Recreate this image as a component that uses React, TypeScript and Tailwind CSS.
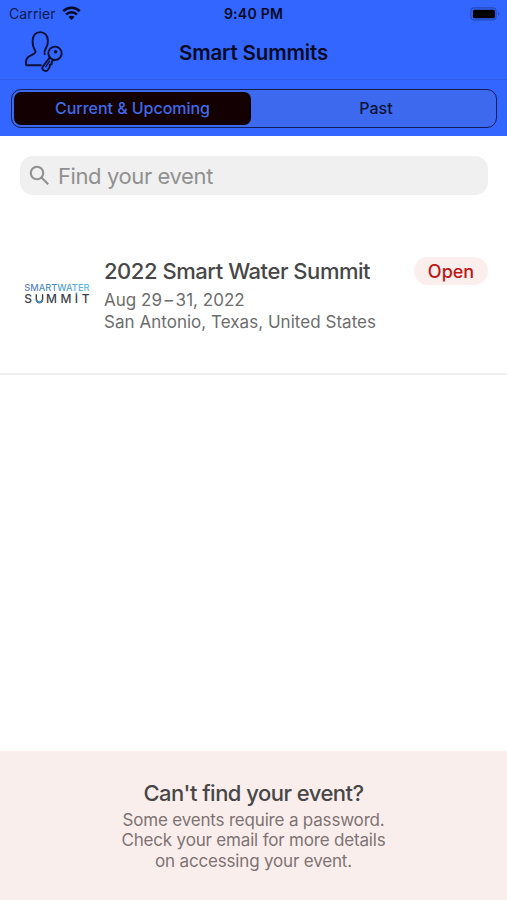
import React from "react";

function WifiIcon() {
  return (
    <svg width="19" height="15" viewBox="0 0 19 15" fill="none">
      <path d="M1.2 5.2 A11.8 11.8 0 0 1 17.8 5.2" stroke="#030922" strokeWidth="2.6" />
      <path d="M4.1 8.5 A7.4 7.4 0 0 1 14.9 8.5" stroke="#030922" strokeWidth="2.5" />
      <path d="M9.5 14 L6.5 11 A4.1 4.1 0 0 1 12.5 11 Z" fill="#030922" />
    </svg>
  );
}

function UserKeyIcon() {
  return (
    <svg width="40" height="42" viewBox="0 0 40 42" fill="none" stroke="#0a1033" strokeWidth="1.9" strokeLinecap="round" strokeLinejoin="round">
      <path d="M17.8 35.2 H3.2 C2.2 30.5 3.5 27.5 7 25.8 L10.4 24.1 C12.6 23 13 21.6 11.8 19.9 C10 17.3 9.6 14.6 9.6 10.8 C9.6 5.5 12.8 2.1 17.2 2.1 C21.6 2.1 24.9 5.5 24.9 10.8 C24.9 14 24.3 16.2 22.8 18.4 C21.5 20.4 21 22.2 21.7 24.2" />
      <circle cx="32" cy="23.3" r="6.7" />
      <path d="M26.6 27.6 L19.8 36.6 C18 39.9 22.8 42.6 25 39.7 L26.8 36.8 L26.8 34.8 L28.7 34 L28.8 31.8 L30.3 29.9" />
      <path d="M26.6 31.1 L22.8 36.8" strokeWidth="1.2" />
      <circle cx="32.6" cy="21.8" r="1.8" fill="#0a1033" stroke="none" />
    </svg>
  );
}

function BatteryIcon() {
  return (
    <svg width="31" height="14" viewBox="0 0 31 14" fill="none">
      <rect x="0.9" y="0.9" width="25.2" height="12" rx="3.4" stroke="#2449b8" strokeWidth="1.1" />
      <rect x="2.9" y="2.7" width="22" height="8.6" rx="1.5" fill="#000" />
      <path d="M28 5 C29.8 5.7 29.8 8.1 28 8.8 Z" fill="#2449b8" />
    </svg>
  );
}

function SummitLogo() {
  return (
    <svg width="68" height="28" viewBox="-1 -2 68 28" fontFamily="Inter, sans-serif">
      <defs>
        <linearGradient id="water" gradientUnits="userSpaceOnUse" x1="0" x2="65" y1="0" y2="0">
          <stop offset="0" stopColor="#6480b8" />
          <stop offset="0.5" stopColor="#4f95c8" />
          <stop offset="1" stopColor="#5fc0e0" />
        </linearGradient>
      </defs>
      <text x="0.3" y="9.3" fontSize="9.4" fontWeight="500" textLength="65.2" lengthAdjust="spacingAndGlyphs" fill="url(#water)">SMARTWATER</text>
      <g fontSize="12" fontWeight="500" fill="#3d4149">
        <text x="0.2" y="21">S</text>
        <text x="22.1" y="21">M</text>
        <text x="36.6" y="21">M</text>
        <text x="50.7" y="21">I</text>
        <text x="57.8" y="21">T</text>
      </g>
      <path d="M12.3 12.3 V16.8 C12.3 21.8 18.6 21.8 18.6 16.8 V12.3" fill="none" stroke="#3d4149" strokeWidth="1.4" />
      <path d="M12.4 17.6 C13.4 21.4 17.5 21.4 18.5 17.6" fill="none" stroke="#3b83bd" strokeWidth="1.7" />
      <circle cx="52.4" cy="11.6" r="1" fill="#5a9fcd" />
    </svg>
  );
}

export default function App() {
  return (
    <div className="flex h-[900px] w-[507px] flex-col overflow-hidden bg-white font-['Inter',sans-serif] text-[#474747]">
      <header className="flex h-[136px] flex-col bg-[#3366ff] text-[#050a24]">
        <div className="grid h-[27px] grid-cols-3 items-center text-[14px] leading-none">
          <div className="flex items-center gap-[6px] pl-[9px]">
            <span className="tracking-[0.1px] text-[#0b1b50]">Carrier</span>
            <WifiIcon />
          </div>
          <span className="text-center font-semibold tracking-[0.25px]">9:40 PM</span>
          <div className="flex justify-end pr-[6px]">
            <BatteryIcon />
          </div>
        </div>
        <div className="grid h-[53px] grid-cols-[80px_1fr_80px] items-center border-b border-[#2e5ce8]">
          <div className="pb-[4px] pl-[23px]">
            <UserKeyIcon />
          </div>
          <h1 className="text-center text-[20.5px] font-semibold leading-none tracking-[-0.15px]">Smart Summits</h1>
        </div>
        <div className="ml-[11px] mr-[10px] mt-[9px] flex h-[39px] rounded-[10px] border-[1.5px] border-[#0f1d58] bg-[#3c69ee] p-[2px] text-[16px] font-medium leading-none">
          <button className="w-[237px] rounded-[7px] bg-[#130003] pb-px tracking-[-0.03px] text-[#4169e8]">Current &amp; Upcoming</button>
          <button className="flex-1 pb-px pl-[7px] text-[#0d1437]">Past</button>
        </div>
      </header>

      <div className="ml-[20px] mr-[19px] mt-[20px] flex h-[39px] items-center rounded-[13px] bg-[#f0f0f0] pl-[9px] text-[#909090]">
        <svg width="21" height="21" viewBox="0 0 21 21" fill="none" stroke="#909090" strokeWidth="2.1">
          <circle cx="8" cy="8" r="6.2" />
          <path d="M12.4 12.4 L19.2 19.2" />
        </svg>
        <span className="pl-[8px] text-[22px] leading-none tracking-[-0.4px]">Find your event</span>
      </div>

      <main className="flex flex-1 flex-col">
        <article className="flex h-[180px] border-b-2 border-[#f0f0f0] pl-[23px] pr-[19px] pt-[62px]">
          <div className="w-[81px] pt-[23px]">
            <SummitLogo />
          </div>
          <div className="flex-1">
            <h2 className="h-[32px] whitespace-nowrap text-[22px] font-medium leading-[28px] tracking-[-0.46px]">2022 Smart Water Summit</h2>
            <p className="whitespace-nowrap text-[17px] leading-[22px] tracking-[0.03px] text-[#6d6d6d]">Aug 29<span className="px-[2.5px]">–</span>31, 2022</p>
            <p className="whitespace-nowrap text-[17px] leading-[22px] tracking-[0.03px] text-[#6d6d6d]">San Antonio, Texas, United States</p>
          </div>
          <span className="flex h-[28px] w-[74px] items-center justify-center rounded-full bg-[#fbefee] pt-px text-[18px] font-medium leading-none text-[#c11515]">Open</span>
        </article>
      </main>

      <footer className="h-[149px] bg-[#faeeed] pt-[28px] text-center">
        <h3 className="h-[30.5px] text-[22px] font-medium leading-[29px] tracking-[-0.53px]">Can't find your event?</h3>
        <p className="text-[17px] leading-[20.5px] tracking-[-0.18px] text-[#7d7373]">
          Some events require a password.<br />
          Check your email for more details<br />
          on accessing your event.
        </p>
      </footer>
    </div>
  );
}
